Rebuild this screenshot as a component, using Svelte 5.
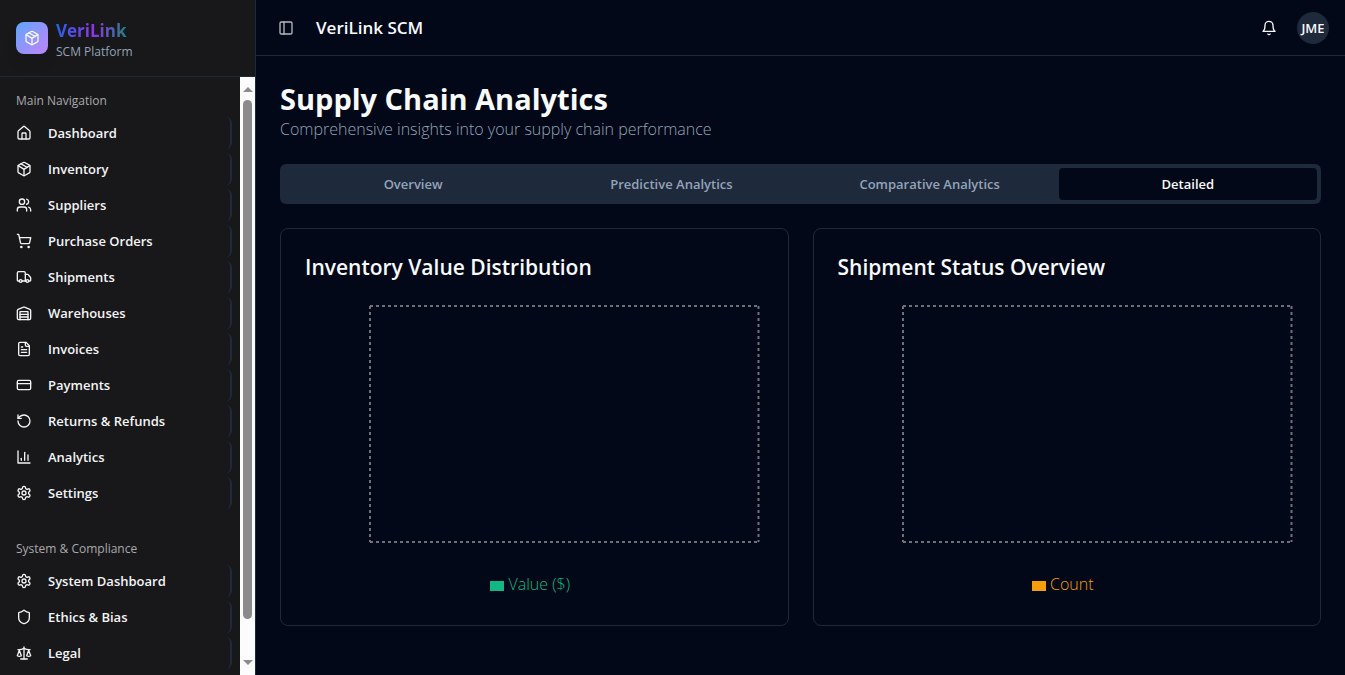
<script lang="ts">
  interface NavItem {
    label: string;
    icon: string;
  }

  interface NavGroup {
    title: string;
    items: NavItem[];
  }

  interface Chart {
    title: string;
    series: string;
    color: string;
  }

  // 24x24 stroke icons
  const icons: Record<string, string> = {
    home: '<path d="M15 21v-8a1 1 0 0 0-1-1h-4a1 1 0 0 0-1 1v8"/><path d="M3 10a2 2 0 0 1 .709-1.528l7-5.999a2 2 0 0 1 2.582 0l7 5.999A2 2 0 0 1 21 10v9a2 2 0 0 1-2 2H5a2 2 0 0 1-2-2z"/>',
    package: '<path d="M11 21.73a2 2 0 0 0 2 0l7-4A2 2 0 0 0 21 16V8a2 2 0 0 0-1-1.73l-7-4a2 2 0 0 0-2 0l-7 4A2 2 0 0 0 3 8v8a2 2 0 0 0 1 1.73z"/><path d="M12 22V12"/><path d="m3.3 7 7.703 4.734a2 2 0 0 0 1.994 0L20.7 7"/><path d="m7.5 4.27 9 5.15"/>',
    users: '<path d="M16 21v-2a4 4 0 0 0-4-4H6a4 4 0 0 0-4 4v2"/><circle cx="9" cy="7" r="4"/><path d="M22 21v-2a4 4 0 0 0-3-3.87"/><path d="M16 3.13a4 4 0 0 1 0 7.75"/>',
    cart: '<circle cx="8" cy="21" r="1"/><circle cx="19" cy="21" r="1"/><path d="M2.05 2.05h2l2.66 12.42a2 2 0 0 0 2 1.58h9.78a2 2 0 0 0 1.95-1.57l1.65-7.43H5.12"/>',
    truck: '<path d="M14 18V6a2 2 0 0 0-2-2H4a2 2 0 0 0-2 2v11a1 1 0 0 0 1 1h2"/><path d="M15 18H9"/><path d="M19 18h2a1 1 0 0 0 1-1v-3.65a1 1 0 0 0-.22-.624l-3.48-4.35A1 1 0 0 0 17.52 8H14"/><circle cx="17" cy="18" r="2"/><circle cx="7" cy="18" r="2"/>',
    warehouse: '<path d="M22 8.35V20a2 2 0 0 1-2 2H4a2 2 0 0 1-2-2V8.35A2 2 0 0 1 3.26 6.5l8-3.2a2 2 0 0 1 1.48 0l8 3.2A2 2 0 0 1 22 8.35Z"/><path d="M6 18h12"/><path d="M6 14h12"/><path d="M6 22V10h12v12"/>',
    file: '<path d="M15 2H6a2 2 0 0 0-2 2v16a2 2 0 0 0 2 2h12a2 2 0 0 0 2-2V7Z"/><path d="M14 2v4a2 2 0 0 0 2 2h4"/><path d="M10 9H8"/><path d="M16 13H8"/><path d="M16 17H8"/>',
    card: '<rect width="20" height="14" x="2" y="5" rx="2"/><path d="M2 10h20"/>',
    rotate: '<path d="M3 12a9 9 0 1 0 9-9 9.75 9.75 0 0 0-6.74 2.74L3 8"/><path d="M3 3v5h5"/>',
    chart: '<path d="M3 3v18h18"/><path d="M18 17V9"/><path d="M13 17V5"/><path d="M8 17v-3"/>',
    settings: '<path d="M12.22 2h-.44a2 2 0 0 0-2 2v.18a2 2 0 0 1-1 1.73l-.43.25a2 2 0 0 1-2 0l-.15-.08a2 2 0 0 0-2.73.73l-.22.38a2 2 0 0 0 .73 2.73l.15.1a2 2 0 0 1 1 1.72v.51a2 2 0 0 1-1 1.74l-.15.09a2 2 0 0 0-.73 2.73l.22.38a2 2 0 0 0 2.73.73l.15-.08a2 2 0 0 1 2 0l.43.25a2 2 0 0 1 1 1.73V20a2 2 0 0 0 2 2h.44a2 2 0 0 0 2-2v-.18a2 2 0 0 1 1-1.73l.43-.25a2 2 0 0 1 2 0l.15.08a2 2 0 0 0 2.73-.73l.22-.39a2 2 0 0 0-.73-2.73l-.15-.08a2 2 0 0 1-1-1.74v-.5a2 2 0 0 1 1-1.74l.15-.09a2 2 0 0 0 .73-2.73l-.22-.38a2 2 0 0 0-2.73-.73l-.15.08a2 2 0 0 1-2 0l-.43-.25a2 2 0 0 1-1-1.73V4a2 2 0 0 0-2-2z"/><circle cx="12" cy="12" r="3"/>',
    shield: '<path d="M20 13c0 5-3.5 7.5-7.66 8.95a1 1 0 0 1-.67-.01C7.5 20.5 4 18 4 13V6a1 1 0 0 1 1-1c2 0 4.5-1.2 6.24-2.72a1.17 1.17 0 0 1 1.52 0C14.51 3.81 17 5 19 5a1 1 0 0 1 1 1z"/>',
    scale: '<path d="m16 16 3-8 3 8c-.87.65-1.92 1-3 1s-2.13-.35-3-1Z"/><path d="m2 16 3-8 3 8c-.87.65-1.92 1-3 1s-2.13-.35-3-1Z"/><path d="M7 21h10"/><path d="M12 3v18"/><path d="M3 7h2c2 0 5-1 7-2 2 1 5 2 7 2h2"/>',
    panel: '<rect width="18" height="18" x="3" y="3" rx="2"/><path d="M9 3v18"/>',
    bell: '<path d="M6 8a6 6 0 0 1 12 0c0 7 3 9 3 9H3s3-2 3-9"/><path d="M10.3 21a1.94 1.94 0 0 0 3.4 0"/>'
  };

  const groups: NavGroup[] = [
    {
      title: 'Main Navigation',
      items: [
        { label: 'Dashboard', icon: 'home' },
        { label: 'Inventory', icon: 'package' },
        { label: 'Suppliers', icon: 'users' },
        { label: 'Purchase Orders', icon: 'cart' },
        { label: 'Shipments', icon: 'truck' },
        { label: 'Warehouses', icon: 'warehouse' },
        { label: 'Invoices', icon: 'file' },
        { label: 'Payments', icon: 'card' },
        { label: 'Returns & Refunds', icon: 'rotate' },
        { label: 'Analytics', icon: 'chart' },
        { label: 'Settings', icon: 'settings' }
      ]
    },
    {
      title: 'System & Compliance',
      items: [
        { label: 'System Dashboard', icon: 'settings' },
        { label: 'Ethics & Bias', icon: 'shield' },
        { label: 'Legal', icon: 'scale' }
      ]
    }
  ];

  const tabs = ['Overview', 'Predictive Analytics', 'Comparative Analytics', 'Detailed'];
  let activeTab = $state('Detailed');

  const charts: Chart[] = [
    { title: 'Inventory Value Distribution', series: 'Value ($)', color: '#10b981' },
    { title: 'Shipment Status Overview', series: 'Count', color: '#f59e0b' }
  ];
</script>

{#snippet icon(name: string)}
  <svg class="icon" viewBox="0 0 24 24" aria-hidden="true">{@html icons[name]}</svg>
{/snippet}

<div class="layout">
  <aside class="sidebar">
    <div class="brand">
      <div class="logo">{@render icon('package')}</div>
      <div class="brand-text">
        <span class="brand-name">VeriLink</span>
        <span class="brand-sub">SCM Platform</span>
      </div>
    </div>

    <div class="sidebar-body">
      <nav class="nav">
        {#each groups as group}
          <section class="nav-group">
            <h2 class="nav-title">{group.title}</h2>
            <ul>
              {#each group.items as item}
                <li>
                  <a class="nav-link" href="#{item.icon}">
                    {@render icon(item.icon)}
                    <span>{item.label}</span>
                  </a>
                </li>
              {/each}
            </ul>
          </section>
        {/each}
      </nav>
      <div class="scrollbar" aria-hidden="true">
        <span class="arrow up"></span>
        <div class="track"><div class="thumb"></div></div>
        <span class="arrow down"></span>
      </div>
    </div>
  </aside>

  <div class="page">
    <header class="topbar">
      <button class="icon-btn toggle" aria-label="Toggle sidebar">{@render icon('panel')}</button>
      <span class="app-name">VeriLink SCM</span>
      <button class="icon-btn" aria-label="Notifications">{@render icon('bell')}</button>
      <button class="avatar">JME</button>
    </header>

    <main>
      <div class="heading">
        <h1>Supply Chain Analytics</h1>
        <p>Comprehensive insights into your supply chain performance</p>
      </div>

      <div class="tabs" role="tablist">
        {#each tabs as tab}
          <button
            class="tab"
            class:active={activeTab === tab}
            role="tab"
            aria-selected={activeTab === tab}
            onclick={() => (activeTab = tab)}>{tab}</button
          >
        {/each}
      </div>

      <div class="cards">
        {#each charts as chart}
          <section class="card">
            <h3>{chart.title}</h3>
            <div class="chart">
              <!-- empty plot area, only the outer grid lines -->
              <svg class="plot">
                <line x1="0" y1="0" x2="100%" y2="0" />
                <line x1="0" y1="100%" x2="100%" y2="100%" />
                <line x1="0" y1="0" x2="0" y2="100%" />
                <line x1="100%" y1="0" x2="100%" y2="100%" />
              </svg>
              <div class="legend" style="color: {chart.color}">
                <span class="swatch"></span>
                <span>{chart.series}</span>
              </div>
            </div>
          </section>
        {/each}
      </div>
    </main>
  </div>
</div>

<style>
  :global(body) {
    margin: 0;
    background: #020817;
  }

  .layout {
    display: flex;
    height: 100vh;
    overflow: hidden;
    background: #020817;
    color: #f8fafc;
    font-family: 'Open Sans', 'Noto Sans', sans-serif;
    font-size: 13px;
    line-height: 20px;
  }

  .layout * {
    box-sizing: border-box;
  }

  h1, h2, h3, p, ul {
    margin: 0;
    padding: 0;
  }

  ul {
    list-style: none;
  }

  button {
    font: inherit;
    color: inherit;
    background: none;
    border: none;
    padding: 0;
    cursor: pointer;
  }

  .icon {
    width: 16px;
    height: 16px;
    flex-shrink: 0;
    fill: none;
    stroke: currentColor;
    stroke-width: 2;
    stroke-linecap: round;
    stroke-linejoin: round;
  }

  /* Sidebar */
  .sidebar {
    display: flex;
    flex-direction: column;
    flex: 0 0 256px;
    background: #18181b;
    border-right: 1px solid #1e293b;
  }

  .brand {
    display: flex;
    align-items: center;
    gap: 8px;
    padding: 16px;
    border-bottom: 1px solid #1e293b;
  }

  .logo {
    display: flex;
    align-items: center;
    justify-content: center;
    width: 32px;
    height: 32px;
    border-radius: 8px;
    background: linear-gradient(135deg, #60a5fa, #c084fc);
    box-shadow: 0 10px 15px -3px rgba(0, 0, 0, 0.1);
  }

  .brand-text {
    display: flex;
    flex-direction: column;
  }

  .brand-name {
    padding-top: 2px;
    font-size: 17px;
    font-weight: 700;
    line-height: 26px;
    color: transparent;
    background: linear-gradient(90deg, #2563eb, #9333ea, #059669);
    background-clip: text;
  }

  .brand-sub {
    font-size: 12px;
    line-height: 16px;
    color: #94a3b8;
  }

  .sidebar-body {
    display: flex;
    flex: 1;
    min-height: 0;
  }

  .nav {
    display: flex;
    flex-direction: column;
    gap: 8px;
    flex: 1;
    overflow: hidden;
  }

  .nav-group {
    padding: 8px;
  }

  .nav-title {
    padding: 0 8px;
    font-size: 12px;
    font-weight: 400;
    line-height: 32px;
    color: #a9a9ab;
  }

  .nav-group ul {
    display: flex;
    flex-direction: column;
    gap: 4px;
  }

  .nav-link {
    display: flex;
    align-items: center;
    gap: 16px;
    height: 32px;
    padding: 0 8px;
    border-right: 2px solid #1e293b;
    border-radius: 6px;
    color: #f4f4f5;
    font-weight: 600;
    text-decoration: none;
  }

  .scrollbar {
    display: flex;
    flex-direction: column;
    align-items: center;
    width: 15px;
    padding: 10px 0;
    background: #fcfcfc;
  }

  .track {
    flex: 1;
    padding: 8px 0;
  }

  .thumb {
    width: 9px;
    height: 94%;
    border-radius: 5px;
    background: #8b8b8b;
  }

  .arrow {
    border: 5px solid transparent;
  }

  .up {
    border-top: 0;
    border-bottom-color: #8b8b8b;
  }

  .down {
    border-bottom: 0;
    border-top-color: #8b8b8b;
  }

  /* Page */
  .page {
    display: flex;
    flex-direction: column;
    flex: 1;
    min-width: 0;
  }

  .topbar {
    display: flex;
    align-items: center;
    gap: 16px;
    height: 56px;
    padding: 0 16px;
    border-bottom: 1px solid #1e293b;
  }

  .icon-btn {
    display: flex;
    align-items: center;
    justify-content: center;
    width: 24px;
    height: 28px;
  }

  .toggle {
    width: 28px;
    color: #b6b8be;
  }

  .app-name {
    flex: 1;
    font-size: 17px;
    font-weight: 600;
    line-height: 28px;
  }

  .avatar {
    width: 32px;
    height: 32px;
    border-radius: 50%;
    background: #1e293b;
    font-weight: 600;
  }

  main {
    display: flex;
    flex-direction: column;
    gap: 24px;
    padding: 24px;
  }

  h1 {
    font-size: 29px;
    font-weight: 700;
    line-height: 38px;
  }

  .heading p {
    font-size: 16px;
    font-weight: 300;
    line-height: 22px;
    color: #94a3b8;
  }

  .tabs {
    display: grid;
    grid-template-columns: repeat(4, 1fr);
    padding: 4px;
    border-radius: 6px;
    background: #1e293b;
  }

  .tab {
    height: 32px;
    border-radius: 4px;
    color: #94a3b8;
    font-weight: 600;
  }

  .tab.active {
    background: #020817;
    color: #f8fafc;
  }

  .cards {
    display: grid;
    grid-template-columns: repeat(2, 1fr);
    gap: 24px;
  }

  .card {
    display: flex;
    flex-direction: column;
    gap: 20px;
    padding: 24px;
    border: 1px solid #1e293b;
    border-radius: 8px;
  }

  h3 {
    font-size: 21px;
    font-weight: 600;
    line-height: 28px;
  }

  .chart {
    display: flex;
    flex-direction: column;
    height: 300px;
    padding: 5px;
  }

  .plot {
    flex: 1;
    margin: 0 0 30px 60px;
    overflow: visible;
  }

  .plot line {
    stroke: #6f7178;
    stroke-width: 2;
    stroke-dasharray: 3 3;
  }

  .legend {
    display: flex;
    align-items: center;
    justify-content: center;
    gap: 4px;
    padding-right: 8px;
    font-size: 16px;
    font-weight: 300;
    line-height: 24px;
  }

  .swatch {
    width: 14px;
    height: 10px;
    margin-top: 4px;
    background: currentColor;
  }
</style>
